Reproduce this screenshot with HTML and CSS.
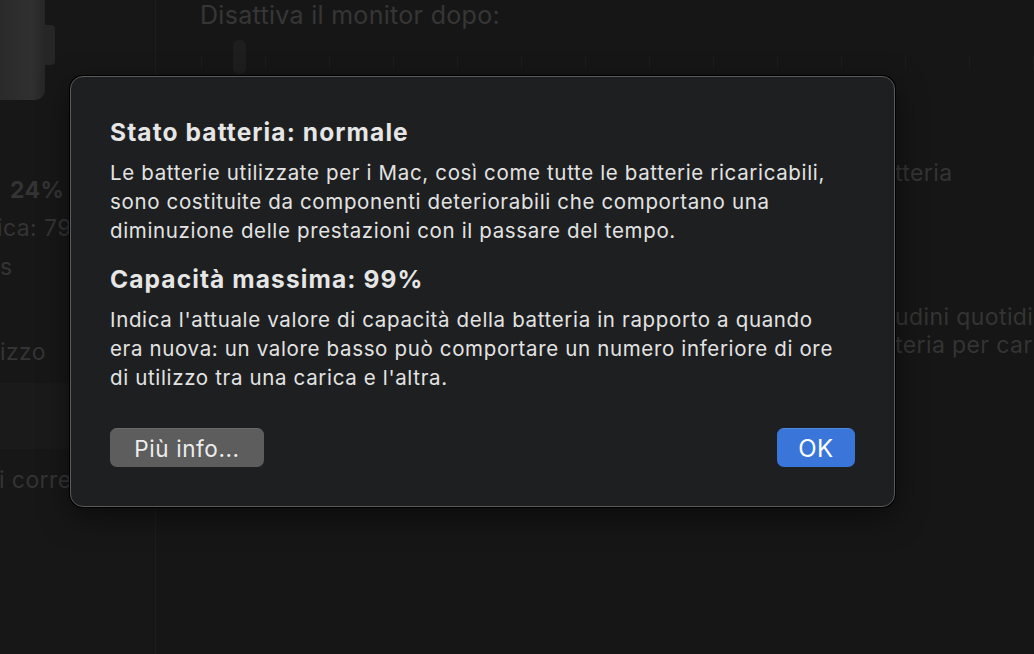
FILE: index.html
```html
<!DOCTYPE html>
<html lang="it">
<head>
    <meta charset="UTF-8">
    <title>Stato batteria</title>
    <link rel="stylesheet" href="styles.css">
</head>
<body>
    <div class="window">
        <aside class="sidebar">
            <div class="battery">
                <div class="battery-body"></div>
                <div class="battery-nub"></div>
            </div>
            <div class="side-level">24%</div>
            <div class="side-line">ica: 79%</div>
            <div class="side-line side-s">s</div>
            <div class="side-row">izzo</div>
            <div class="side-band"></div>
            <div class="side-row side-last">i corrente</div>
        </aside>

        <main class="main">
            <h2 class="bg-title">Disattiva il monitor dopo:</h2>
            <div class="slider">
                <div class="ticks">
                    <span></span><span></span><span></span><span></span><span></span>
                    <span></span><span></span><span></span><span></span><span></span>
                    <span></span><span></span><span></span><span></span>
                </div>
                <div class="thumb"></div>
            </div>
            <div class="bg-right first">tteria</div>
            <div class="bg-right second">udini quotidiani</div>
            <div class="bg-right">teria per carica</div>
        </main>
    </div>

    <div class="dialog">
        <h1>Stato batteria: normale</h1>
        <p>Le batterie utilizzate per i Mac, così come tutte le batterie ricaricabili,<br>sono costituite da componenti deteriorabili che comportano una<br>diminuzione delle prestazioni con il passare del tempo.</p>
        <h1>Capacità massima: 99%</h1>
        <p>Indica l'attuale valore di capacità della batteria in rapporto a quando<br>era nuova: un valore basso può comportare un numero inferiore di ore<br>di utilizzo tra una carica e l'altra.</p>
        <div class="buttons">
            <button class="btn-info">Più info...</button>
            <button class="btn-ok">OK</button>
        </div>
    </div>
</body>
</html>
```

FILE: styles.css
```css
body {
    margin: 0;
    background-color: #161616;
    font-family: Inter, "Noto Sans", sans-serif;
    overflow: hidden;
}

.window {
    display: flex;
    height: 654px;
}

/* left column, mostly hidden behind the dialog */
.sidebar {
    width: 155px;
    flex-shrink: 0;
    background-color: #171717;
    border-right: 1px solid #1d1d1d;
    color: #343434;
    font-size: 23px;
    letter-spacing: 0.4px;
    white-space: nowrap;
    overflow: hidden;
}

.battery {
    display: flex;
    align-items: center;
    height: 100px;
}

.battery-body {
    width: 45px;
    height: 100px;
    border-radius: 0 0 10px 0;
    background: linear-gradient(90deg, #2a2a2a, #303030 70%, #262626);
}

.battery-nub {
    width: 10px;
    height: 40px;
    margin-top: -10px;
    border-radius: 0 4px 4px 0;
    background-color: #262626;
}

.side-level {
    margin-top: 76px;
    padding-left: 10px;
    font-weight: 700;
    line-height: 28px;
}

.side-line {
    margin-top: 10px;
    margin-left: -3px;
    line-height: 28px;
}

.side-s {
    margin-top: 11px;
    margin-left: 0;
}

.side-row {
    margin-top: 57px;
    line-height: 28px;
}

.side-band {
    height: 66px;
    margin-top: 17px;
    background-color: #1a1a1a;
}

.side-last {
    margin-top: 17px;
    margin-left: -1px;
}

.main {
    flex: 1;
    padding: 0 0 0 44px;
    color: #343434;
    font-size: 23px;
    letter-spacing: 0.4px;
    white-space: nowrap;
    overflow: hidden;
}

.bg-title {
    margin: 0;
    padding-top: 1px;
    font-size: 25px;
    font-weight: 400;
    letter-spacing: 0.3px;
    line-height: 28px;
    color: #363636;
}

.slider {
    position: relative;
    height: 40px;
    margin-top: 11px;
}

.ticks {
    display: flex;
    gap: 62.5px;
    padding-top: 16px;
    margin-left: 1px;
}

.ticks span {
    width: 1.5px;
    height: 14px;
    background-color: #1c1c1c;
}

.thumb {
    position: absolute;
    left: 33px;
    top: 0;
    width: 13px;
    height: 34px;
    border-radius: 6px;
    background-color: #1e1e1e;
}

.bg-right {
    padding-left: 695px;
    line-height: 28px;
}

.bg-right.first {
    margin-top: 79px;
}

.bg-right.second {
    margin-top: 116px;
}

/* modal dialog */
.dialog {
    position: absolute;
    left: 70px;
    top: 76px;
    width: 823px;
    height: 429px;
    display: flex;
    flex-direction: column;
    background-color: #1e1f20;
    border: 1px solid #5a5a5a;
    border-radius: 13px;
    box-shadow: 0 0 0 1px #000, 0 10px 30px rgba(0,0,0,0.5);
    color: #e3e3e3;
}

.dialog h1 {
    margin: 0;
    padding: 0 39px;
    font-size: 24.5px;
    font-weight: 700;
    letter-spacing: 1.1px;
    line-height: 30px;
    color: #e6e6e6;
}

.dialog h1:first-child {
    margin-top: 40px;
}

.dialog p {
    margin: 11px 0 19px;
    padding: 0 39px;
    font-size: 20.5px;
    letter-spacing: 0.65px;
    line-height: 29px;
    white-space: nowrap;
}

.buttons {
    display: flex;
    justify-content: space-between;
    margin-top: auto;
    padding: 0 39px 39px;
}

button {
    height: 39px;
    border: none;
    border-radius: 7px;
    font-family: Inter, "Noto Sans", sans-serif;
    font-size: 22.5px;
    letter-spacing: 0.6px;
    color: #ededed;
    cursor: pointer;
}

.btn-info {
    width: 154px;
    background-color: #5d5d5d;
    border-top: 1px solid #6a6a6a;
}

.btn-ok {
    width: 78px;
    font-size: 24px;
    background-color: #3a76d9;
    border-top: 1px solid #4d86e2;
    color: #fff;
}
```
